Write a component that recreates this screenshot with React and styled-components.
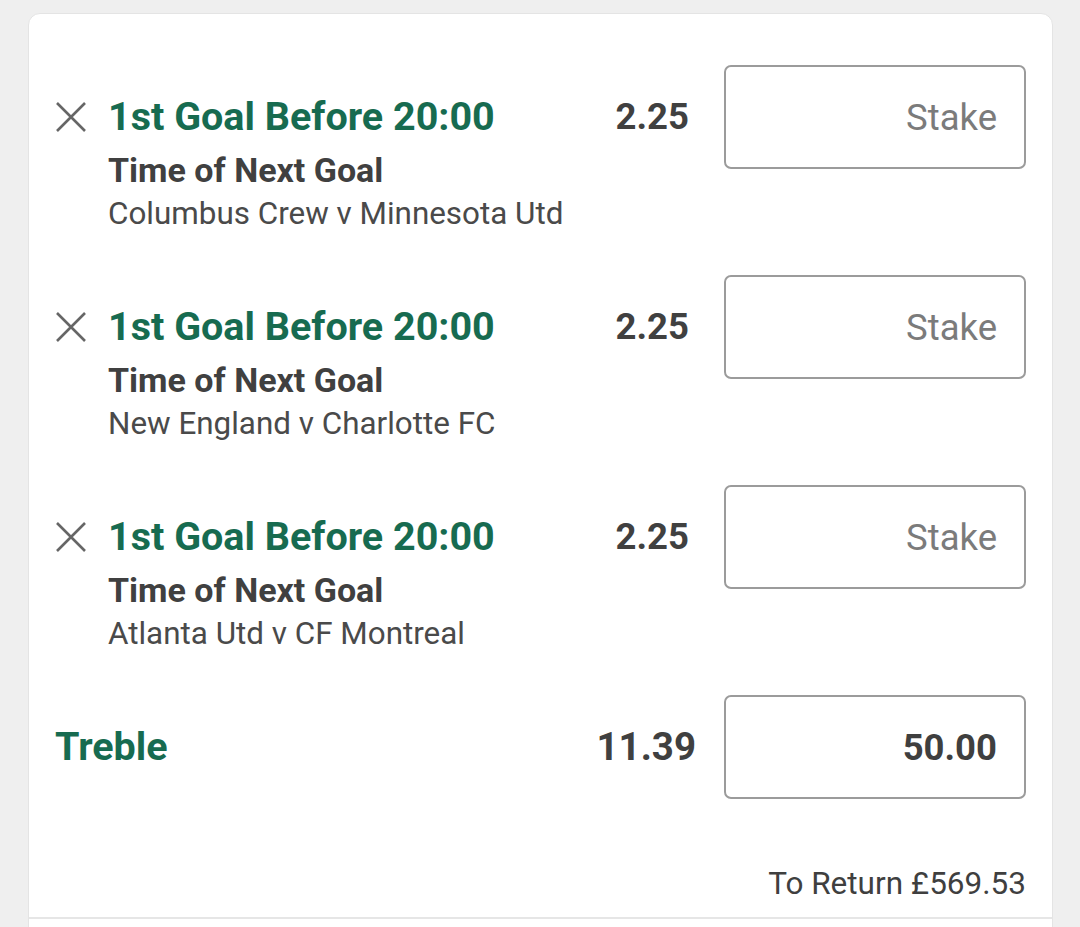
import React from "react";
import styled, { createGlobalStyle } from "styled-components";

const Global = createGlobalStyle`
  html, body { margin: 0; padding: 0; background: #efefef; }
  body { font-family: Roboto, "Noto Sans", "Liberation Sans", sans-serif; }
`;

const Page = styled.div`
  padding: 13px 27px 0 28px;
  height: 927px;
  box-sizing: border-box;
  overflow: hidden;
`;

const Card = styled.div`
  background: #fff;
  border: 1px solid #e4e4e4;
  border-radius: 12px;
  padding: 51px 26px 0 26px;
  min-height: 960px;
  display: flex;
  flex-direction: column;
`;

const Leg = styled.div`
  display: grid;
  grid-template-columns: 53px 1fr auto 302px;
  grid-template-rows: 104px auto auto;
  column-gap: 35px;
  margin-bottom: 39px;
`;

const Remove = styled.button`
  grid-row: 1;
  grid-column: 1;
  align-self: center;
  justify-self: start;
  border: 0;
  background: none;
  padding: 0;
  width: 32px;
  height: 32px;
  display: flex;
  align-items: center;
  justify-content: center;
  cursor: pointer;
`;

const Selection = styled.div`
  grid-row: 1;
  grid-column: ${(p) => (p.$wide ? "1 / span 2" : "2")};
  align-self: center;
  color: #176b50;
  font-weight: 700;
  font-size: 39.5px;
  line-height: 48px;
  white-space: nowrap;
  margin-left: ${(p) => (p.$wide ? "0" : "-35px")};
`;

const Market = styled.div`
  grid-row: 2;
  grid-column: 2 / span 3;
  margin-left: -35px;
  margin-top: -22px;
  color: #404040;
  font-weight: 700;
  font-size: 34px;
  line-height: 46px;
`;

const Event = styled.div`
  grid-row: 3;
  grid-column: 2 / span 3;
  margin-left: -35px;
  margin-top: -1px;
  color: #4a4a4a;
  font-size: 31.4px;
  line-height: 44px;
`;

const Odds = styled.div`
  grid-row: 1;
  grid-column: 3;
  align-self: center;
  color: #404040;
  font-weight: 700;
  font-size: ${(p) => (p.$big ? "38.5px" : "36.5px")};
  line-height: 48px;
`;

const StakeBox = styled.div`
  grid-row: 1;
  grid-column: 4;
  box-sizing: border-box;
  height: 104px;
  border: 2px solid #9b9b9b;
  border-radius: 7px;
  display: flex;
  align-items: center;
  justify-content: flex-end;
  padding-right: 27px;
  font-size: 36.5px;
  color: ${(p) => (p.$filled ? "#3f3f3f" : "#7b7b7b")};
  font-weight: ${(p) => (p.$filled ? 700 : 400)};
`;

const MultiRow = styled.div`
  display: grid;
  grid-template-columns: 53px 1fr auto 302px;
  grid-template-rows: 104px;
  column-gap: 28px;
`;

const Return = styled.div`
  margin-top: 65px;
  text-align: right;
  color: #3f3f3f;
  font-size: 31.5px;
  line-height: 40px;
`;

const Divider = styled.div`
  margin: 13px -26px 0;
  border-top: 2px solid #e6e6e6;
`;

const Cross = () => (
  <svg width="32" height="32" viewBox="0 0 32 32" fill="none">
    <path d="M2 2 L30 30 M30 2 L2 30" stroke="#666" strokeWidth="2.6" />
  </svg>
);

const legs = [
  "Columbus Crew v Minnesota Utd",
  "New England v Charlotte FC",
  "Atlanta Utd v CF Montreal",
];

export default function App() {
  return (
    <>
      <Global />
      <Page>
        <Card>
          {legs.map((ev) => (
            <Leg key={ev}>
              <Remove aria-label="Remove">
                <Cross />
              </Remove>
              <Selection>1st Goal Before 20:00</Selection>
              <Odds>2.25</Odds>
              <StakeBox>Stake</StakeBox>
              <Market>Time of Next Goal</Market>
              <Event>{ev}</Event>
            </Leg>
          ))}
          <MultiRow>
            <Selection $wide>Treble</Selection>
            <Odds $big>11.39</Odds>
            <StakeBox $filled>50.00</StakeBox>
          </MultiRow>
          <Return>To Return £569.53</Return>
          <Divider />
        </Card>
      </Page>
    </>
  );
}
